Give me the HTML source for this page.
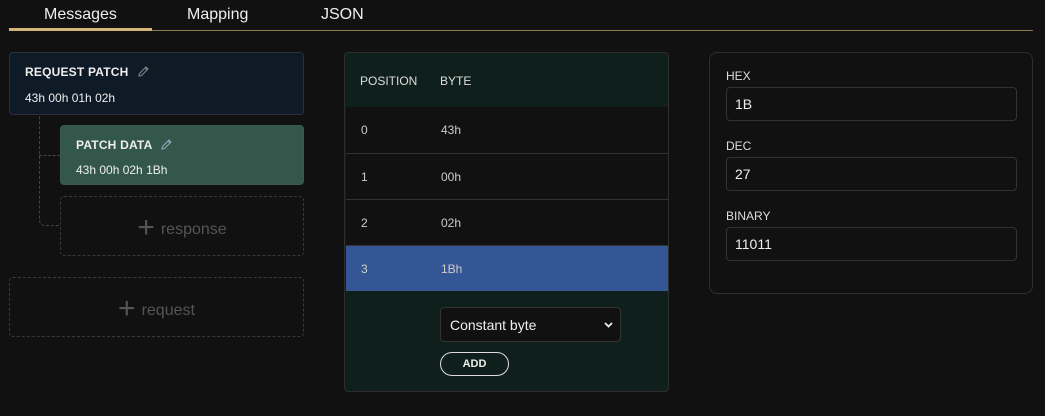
<!DOCTYPE html>
<html><head><style>
*{box-sizing:border-box;margin:0;padding:0}
body{width:1045px;height:416px;background:#111;font-family:"Liberation Sans",sans-serif;color:#eee;position:relative;overflow:hidden}
.a{position:absolute}
.tab{font-size:16px;color:#eee;top:6px}
.card{border-radius:4px;border:1px solid #2c3038}
.t{font-weight:bold;font-size:12px;letter-spacing:0.2px}
.s{font-size:12px}
.dash{border:1px dashed #3a3a3a;border-radius:4px;color:#555;font-size:16px;display:flex;align-items:center;justify-content:center;padding-top:8px}
.plus{font-size:30px;font-weight:300;margin-right:6px;color:#555;line-height:1;margin-top:-4px}
.row{left:1px;width:322px;height:46px;border-top:1px solid #333;font-size:12px;color:#ccc}
.row span{position:absolute;top:16px}
.lbl{font-size:12px;color:#ddd;left:16px}
.inp{left:16px;width:291px;height:34px;border:1px solid #333;border-radius:4px;font-size:14px;padding:8px 8px;color:#eee}
svg.p{vertical-align:-2px;margin-left:8px}
</style></head><body>
<div class="a tab" style="left:44px">Messages</div>
<div class="a tab" style="left:187px">Mapping</div>
<div class="a tab" style="left:321px">JSON</div>
<div class="a" style="left:9px;top:30px;width:1024px;height:1px;background:#8c7a4a"></div>
<div class="a" style="left:9px;top:28px;width:143px;height:3px;background:#d2b577"></div>

<div class="a" style="left:39px;top:114px;width:21px;height:112px;border-left:1px dashed #444;border-bottom:1px dashed #444;border-bottom-left-radius:6px"></div>
<div class="a" style="left:39px;top:155px;width:21px;border-top:1px dashed #444"></div>

<div class="a card" style="left:9px;top:52px;width:295px;height:63px;background:#0e1b26">
 <div class="a t" style="left:15px;top:12px">REQUEST PATCH<svg class="p" width="13" height="13" viewBox="0 0 13 13"><path d="M2 11 L2.5 8.5 L9 2 L11 4 L4.5 10.5 Z M8 3 L10 5" fill="none" stroke="#888" stroke-width="1"/></svg></div>
 <div class="a s" style="left:15px;top:38px">43h 00h 01h 02h</div>
</div>
<div class="a card" style="left:60px;top:125px;width:244px;height:60px;background:#33574b;border-color:#3a5a50">
 <div class="a t" style="left:15px;top:12px">PATCH DATA<svg class="p" width="13" height="13" viewBox="0 0 13 13"><path d="M2 11 L2.5 8.5 L9 2 L11 4 L4.5 10.5 Z M8 3 L10 5" fill="none" stroke="#9ab" stroke-width="1"/></svg></div>
 <div class="a s" style="left:15px;top:37px">43h 00h 02h 1Bh</div>
</div>
<div class="a dash" style="left:60px;top:196px;width:244px;height:60px"><span class="plus">+</span>response</div>
<div class="a dash" style="left:9px;top:277px;width:295px;height:60px"><span class="plus">+</span>request</div>

<div class="a" style="left:344px;top:52px;width:325px;height:340px;border:1px solid #2e2e2e;border-radius:4px;background:#0f201c;overflow:hidden">
 <div class="a" style="left:15px;top:21px;font-size:12px;color:#ddd">POSITION</div>
 <div class="a" style="left:95px;top:21px;font-size:12px;color:#ddd">BYTE</div>
 <div class="a row" style="top:54px;border-top:none;background:#111;height:46px"><span style="left:15px">0</span><span style="left:95px">43h</span></div>
 <div class="a row" style="top:100px;background:#111"><span style="left:15px">1</span><span style="left:95px">00h</span></div>
 <div class="a row" style="top:146px;background:#111"><span style="left:15px">2</span><span style="left:95px">02h</span></div>
 <div class="a row" style="top:192px;background:#355694;border-top:1px solid #333"><span style="left:15px">3</span><span style="left:95px">1Bh</span></div>
 <div class="a" style="left:95px;top:254px;width:181px;height:35px;background:#111;border:1px solid #333;border-radius:4px;font-size:14px;padding:9px 9px;color:#eee">Constant byte<svg style="position:absolute;right:7px;top:14px" width="9" height="6" viewBox="0 0 9 6"><path d="M1 1 L4.5 4.5 L8 1" fill="none" stroke="#eee" stroke-width="1.8"/></svg></div>
 <div class="a" style="left:95px;top:299px;width:69px;height:24px;border:1px solid #ddd;border-radius:12px;font-size:11px;font-weight:bold;text-align:center;line-height:22px">ADD</div>
</div>

<div class="a" style="left:709px;top:52px;width:324px;height:242px;border:1px solid #2e2e2e;border-radius:8px">
 <div class="a lbl" style="top:16px">HEX</div>
 <div class="a inp" style="top:34px">1B</div>
 <div class="a lbl" style="top:86px">DEC</div>
 <div class="a inp" style="top:104px">27</div>
 <div class="a lbl" style="top:156px">BINARY</div>
 <div class="a inp" style="top:174px">11011</div>
</div>
</body></html>
